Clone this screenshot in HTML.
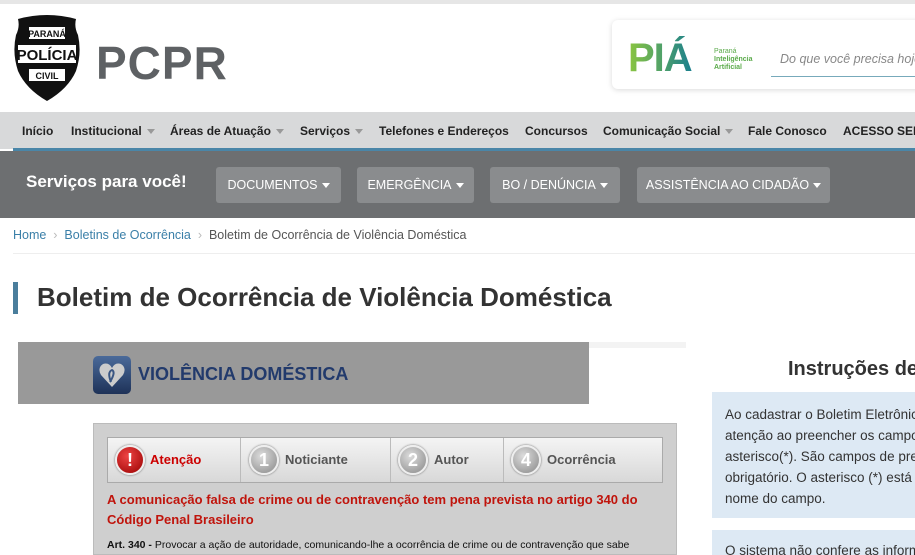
<!DOCTYPE html>
<html style="overflow:hidden"><head><meta charset="utf-8"><style>
*{margin:0;padding:0;box-sizing:border-box}
body{width:915px;height:555px;overflow:hidden;background:#fff;font-family:"Liberation Sans",Arial,sans-serif;position:relative}
.a{position:absolute}
.nav span{position:absolute;top:124px;font-size:12px;font-weight:bold;color:#222;white-space:nowrap}
.car{display:inline-block;width:0;height:0;border-left:4px solid transparent;border-right:4px solid transparent;border-top:5px solid #999;margin-left:5px;vertical-align:middle}
.btn{position:absolute;top:167px;height:36px;background:#8a8c8e;border-radius:3px;color:#fff;font-size:12.5px;line-height:36px;text-align:center;white-space:nowrap}
.btn i{display:inline-block;border-left:4px solid transparent;border-right:4px solid transparent;border-top:5px solid #fff;margin-left:4px;vertical-align:middle}
.tab{position:absolute;top:438px;height:44px;border-right:1px solid #bbb;font-weight:bold;font-size:13px;color:#555;line-height:44px}
.c{position:absolute;top:7px;width:30px;height:30px;border-radius:50%;background:radial-gradient(circle at 40% 35%,#ddd,#888);border:2px solid #eee;color:#fff;font-size:18px;line-height:26px;text-align:center;box-shadow:0 0 2px #666}
</style></head><body>
<div class="a" style="left:0;top:0;width:915px;height:4px;background:#e6e6e6"></div>
<svg class="a" style="left:12px;top:13px" width="70" height="89" viewBox="0 0 70 89">
<path d="M6 6 Q35 -2 64 6 Q62 14 66 22 Q70 40 64 58 Q56 76 35 88 Q14 76 6 58 Q0 40 4 22 Q8 14 6 6Z" fill="#111"/>
<rect x="17" y="14" width="36" height="12" fill="#fff"/><text x="35" y="24" font-size="9" font-weight="bold" text-anchor="middle" fill="#111">PARANÁ</text>
<rect x="6" y="32" width="58" height="18" fill="#fff"/><text x="35" y="47" font-size="15" font-weight="bold" text-anchor="middle" fill="#111">POLÍCIA</text>
<rect x="17" y="56" width="36" height="12" fill="#fff"/><text x="35" y="66" font-size="9" font-weight="bold" text-anchor="middle" fill="#111">CIVIL</text>
</svg>
<div class="a" style="left:96px;top:36px;font-size:46px;font-weight:bold;color:#5e6164;letter-spacing:1px">PCPR</div>
<div class="a" style="left:612px;top:20px;width:320px;height:69px;background:#fff;border-radius:6px;box-shadow:0 1px 6px rgba(0,0,0,.15)"></div>
<div class="a" style="left:628px;top:36px;font-size:40px;font-weight:bold;letter-spacing:-1px;background:linear-gradient(90deg,#8cc63f,#1a7f8e);-webkit-background-clip:text;color:transparent">PIÁ</div>
<div class="a" style="left:714px;top:48px;font-size:7px;line-height:8px;color:#5aaa4a">Paraná<br><b>Inteligência<br>Artificial</b></div>
<div class="a" style="left:780px;top:52px;font-size:12.5px;font-style:italic;color:#888;white-space:nowrap">Do que você precisa hoje</div>
<div class="a" style="left:771px;top:76px;width:144px;height:1px;background:#7ab"></div>
<div class="a" style="left:0;top:112px;width:915px;height:37px;background:#d8d9da"></div>
<div class="a" style="left:13px;top:148px;width:902px;height:3px;background:#4a86a8"></div>
<div class="nav">
<span style="left:22px">Início</span>
<span style="left:71px">Institucional<i class="car"></i></span>
<span style="left:170px">Áreas de Atuação<i class="car"></i></span>
<span style="left:300px">Serviços<i class="car"></i></span>
<span style="left:379px">Telefones e Endereços</span>
<span style="left:525px">Concursos</span>
<span style="left:603px">Comunicação Social<i class="car"></i></span>
<span style="left:748px">Fale Conosco</span>
<span style="left:843px">ACESSO SERVIDOR</span>
</div>
<div class="a" style="left:0;top:151px;width:915px;height:67px;background:#6d6f71"></div>
<div class="a" style="left:26px;top:172px;font-size:17px;font-weight:bold;color:#fff">Serviços para você!</div>
<div class="btn" style="left:216px;width:125px">DOCUMENTOS<i></i></div>
<div class="btn" style="left:357px;width:117px">EMERGÊNCIA<i></i></div>
<div class="btn" style="left:490px;width:130px">BO / DENÚNCIA<i></i></div>
<div class="btn" style="left:637px;width:193px">ASSISTÊNCIA AO CIDADÃO<i></i></div>
<div class="a" style="left:13px;top:228px;font-size:12.5px;color:#555;white-space:nowrap"><span style="color:#3a7fa8">Home</span> <span style="color:#bbb">&nbsp;›&nbsp;</span> <span style="color:#3a7fa8">Boletins de Ocorrência</span> <span style="color:#bbb">&nbsp;›&nbsp;</span> Boletim de Ocorrência de Violência Doméstica</div>
<div class="a" style="left:13px;top:253px;width:902px;height:1px;background:#eee"></div>
<div class="a" style="left:13px;top:282px;width:5px;height:32px;background:#4a7e9c"></div>
<div class="a" style="left:37px;top:282px;font-size:26px;font-weight:bold;color:#333;white-space:nowrap">Boletim de Ocorrência de Violência Doméstica</div>
<div class="a" style="left:589px;top:342px;width:97px;height:6px;background:#f3f3f3"></div>
<div class="a" style="left:18px;top:342px;width:571px;height:62px;background:#999"></div>
<div class="a" style="left:93px;top:356px;width:38px;height:38px;border-radius:5px;background:linear-gradient(#4a6a9a,#1e3258)"></div>
<svg class="a" style="left:98px;top:362px" width="28" height="26" viewBox="0 0 28 26"><path d="M14 25 L3 13 Q-1 6 5 2 Q11 0 14 6 Q17 0 23 2 Q29 6 25 13Z" fill="#ccc"/><path d="M13 20 Q9 10 14 8 Q18 10 12 20" stroke="#3a5683" stroke-width="2" fill="none"/></svg>
<div class="a" style="left:138px;top:364px;font-size:18px;font-weight:bold;color:#223a6c">VIOLÊNCIA DOMÉSTICA</div>
<div class="a" style="left:93px;top:423px;width:584px;height:132px;background:#cfcfcf;border:1px solid #bbb"></div>
<div class="a" style="left:107px;top:437px;width:556px;height:46px;border:1px solid #aaa;background:linear-gradient(#f4f4f4,#d8d8d8)"></div>
<div class="tab" style="left:108px;width:133px"><div class="c" style="left:7px;background:radial-gradient(circle at 40% 35%,#e44,#900)">!</div><span style="margin-left:42px;color:#c00">Atenção</span></div>
<div class="tab" style="left:241px;width:150px"><div class="c" style="left:8px">1</div><span style="margin-left:44px">Noticiante</span></div>
<div class="tab" style="left:391px;width:113px"><div class="c" style="left:7px">2</div><span style="margin-left:43px">Autor</span></div>
<div class="tab" style="left:504px;width:158px;border-right:none"><div class="c" style="left:7px">4</div><span style="margin-left:43px">Ocorrência</span></div>
<div class="a" style="left:107px;top:490px;width:540px;font-size:13px;font-weight:bold;color:#c0140c;line-height:20px">A comunicação falsa de crime ou de contravenção tem pena prevista no artigo 340 do Código Penal Brasileiro</div>
<div class="a" style="left:107px;top:539px;font-size:10.5px;color:#111;white-space:nowrap"><b>Art. 340 -</b> Provocar a ação de autoridade, comunicando-lhe a ocorrência de crime ou de contravenção que sabe</div>
<div class="a" style="left:712px;top:358px;width:203px;height:160px;overflow:hidden">
<div style="position:absolute;left:76px;top:0;font-size:20px;font-weight:bold;color:#333;white-space:nowrap">Instruções de</div>
<div style="position:absolute;left:0;top:34px;width:210px;height:128px;background:#dde9f4"></div>
<div style="position:absolute;left:13px;top:46px;font-size:13.5px;line-height:21px;color:#333;white-space:nowrap">Ao cadastrar o Boletim Eletrônico<br>atenção ao preencher os campos<br>asterisco(*). São campos de pre<br>obrigatório. O asterisco (*) está<br>nome do campo.</div>
</div>
<div class="a" style="left:712px;top:530px;width:203px;height:25px;overflow:hidden;background:#dde9f4">
<div style="position:absolute;left:13px;top:13px;font-size:13.5px;color:#333;white-space:nowrap">O sistema não confere as informações</div></div>
</body></html>
